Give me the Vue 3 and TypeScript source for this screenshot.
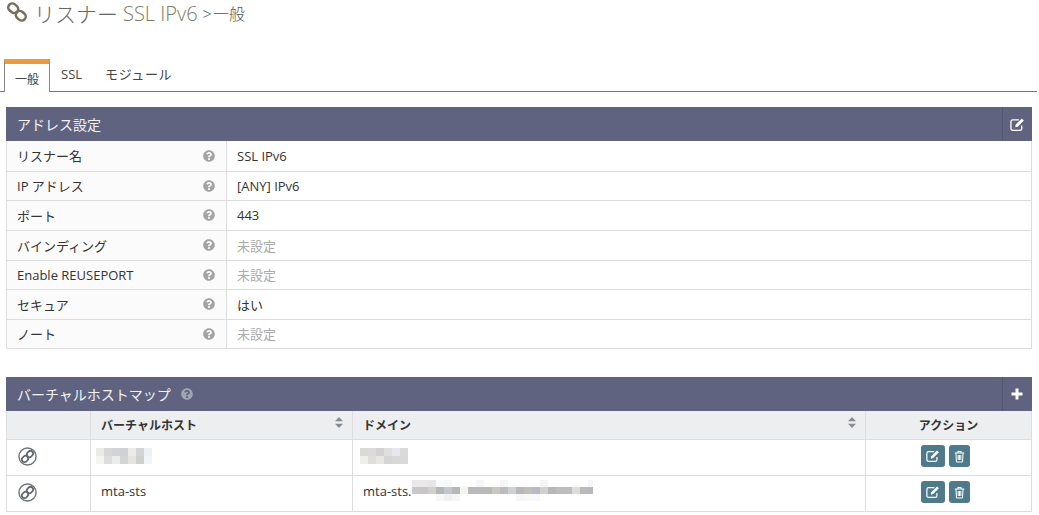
<script setup lang="ts">
interface Row {
  label: string
  value: string
  unset?: boolean
}

const rows: Row[] = [
  { label: 'リスナー名', value: 'SSL IPv6' },
  { label: 'IP アドレス', value: '[ANY] IPv6' },
  { label: 'ポート', value: '443' },
  { label: 'バインディング', value: '未設定', unset: true },
  { label: 'Enable REUSEPORT', value: '未設定', unset: true },
  { label: 'セキュア', value: 'はい' },
  { label: 'ノート', value: '未設定', unset: true }
]

// ぼかし部分のセル色
const blurHost = [
  '#eaeae8', '#d6d7d7', '#d2d3d4', '#d0d1d2', '#ecebe9', '#d3d4d6', '#eef0f5',
  '#f4f4f2', '#dcdddc', '#ebecec', '#d4d4d4', '#e4e4e1', '#cfcfcf', '#f3f4f7'
]
const blurDomain = [
  '#dad9d8', '#dcdbda', '#d2d2d2', '#dfdfe0', '#e6e8ee', '#dadada',
  '#eeeeea', '#dededd', '#e8e7e4', '#d5d5d6', '#d8d8d9', '#d9d9d9'
]
const w = '#ffffff'
const blurLong = [
  '#ebe8e8', '#eae8e8', '#e6e5e8', '#f9fafc', '#f8f8fa', w, w, w, '#f6f6f6', w, w, '#f6f6f6', w, w, w, w, '#f4f4f5', w, w, w, w, w, '#f6f6f6',
  '#c9c7c7', '#c8c6c6', '#d2cfce', '#b5b6b6', '#c3c6cc', '#b6b7b7', '#f3f4ee', '#b8b9b9', '#b8b9ba', '#b9b9b8', '#cac7c3', '#bbbcbc', '#cdd0d6', '#b9b8b8', '#c2bebb', '#b8babf', '#d0d0d0', '#b9b7b5', '#bcbdc1', '#bcbdc1', '#dddcd8', '#bdb9b7', '#b5b8bc',
  w, w, w, '#f7f7f8', '#f0f0f1', '#f6f6f6', w, w, w, w, w, w, w, '#f8f6f6', '#faf9f5', '#f8f9fc', w, w, w, w, w, w, w
]
</script>

<template>
  <div class="page">
    <h2 class="title">
      <svg class="title-icon" viewBox="0 0 20 20" width="20" height="20">
        <g fill="none" stroke="#75705f" stroke-width="2.500">
          <rect x="1" y="2.200" width="10.400" height="8" rx="4" transform="rotate(40 6.200 6.200)" />
          <rect x="8.600" y="9.800" width="10.400" height="8" rx="4" transform="rotate(40 13.800 13.800)" />
        </g>
      </svg>
      <span class="title-main">リスナー</span>
      <span class="title-name">SSL IPv6</span>
      <span class="title-sub">&gt; 一般</span>
    </h2>

    <ul class="tabs">
      <li class="tab active">一般</li>
      <li class="tab">SSL</li>
      <li class="tab tab-mod">モジュール</li>
    </ul>

    <section class="panel">
      <header class="panel-head">
        <span class="panel-title">アドレス設定</span>
        <span class="panel-action">
          <svg viewBox="0 0 16 16" width="15" height="15">
            <path d="M12.500 9v3.200a2 2 0 0 1-2 2H3a2 2 0 0 1-2-2V5a2 2 0 0 1 2-2h6.500" fill="none" stroke="#fff" stroke-width="1.400" />
            <path d="M6 8.200 12.600 1.600l2.200 2.200L8.200 10.400 5.600 11z" fill="#fff" />
          </svg>
        </span>
      </header>
      <table class="info">
        <colgroup>
          <col style="width: 220px" />
          <col />
        </colgroup>
        <tbody>
          <tr v-for="row in rows" :key="row.label">
            <td class="info-label">
              <div class="label-inner">
                <span>{{ row.label }}</span>
                <svg class="help" viewBox="0 0 512 512" width="12" height="12">
                  <path fill="#a3a3a3" d="M504 256c0 136.997-111.043 248-248 248S8 392.997 8 256C8 119.083 119.043 8 256 8s248 111.083 248 248zM262.655 90c-54.497 0-89.255 22.957-116.549 63.758-3.536 5.286-2.353 12.415 2.715 16.258l34.699 26.31c5.205 3.947 12.621 3.008 16.665-2.122 17.864-22.658 30.113-35.797 57.303-35.797 20.429 0 45.698 13.148 45.698 32.958 0 14.976-12.363 22.667-32.534 33.976C247.128 238.528 216 254.941 216 296v4c0 6.627 5.373 12 12 12h56c6.627 0 12-5.373 12-12v-1.333c0-28.462 83.186-29.647 83.186-106.667 0-58.002-60.165-102-116.531-102zM256 338c-25.365 0-46 20.635-46 46 0 25.364 20.635 46 46 46s46-20.636 46-46c0-25.365-20.635-46-46-46z" />
                </svg>
              </div>
            </td>
            <td :class="['info-value', { unset: row.unset }]">{{ row.value }}</td>
          </tr>
        </tbody>
      </table>
    </section>

    <section class="panel map">
      <header class="panel-head">
        <span class="panel-title">
          バーチャルホストマップ
          <svg class="help head-help" viewBox="0 0 512 512" width="12" height="12">
            <path fill="#a3a5ae" d="M504 256c0 136.997-111.043 248-248 248S8 392.997 8 256C8 119.083 119.043 8 256 8s248 111.083 248 248zM262.655 90c-54.497 0-89.255 22.957-116.549 63.758-3.536 5.286-2.353 12.415 2.715 16.258l34.699 26.31c5.205 3.947 12.621 3.008 16.665-2.122 17.864-22.658 30.113-35.797 57.303-35.797 20.429 0 45.698 13.148 45.698 32.958 0 14.976-12.363 22.667-32.534 33.976C247.128 238.528 216 254.941 216 296v4c0 6.627 5.373 12 12 12h56c6.627 0 12-5.373 12-12v-1.333c0-28.462 83.186-29.647 83.186-106.667 0-58.002-60.165-102-116.531-102zM256 338c-25.365 0-46 20.635-46 46 0 25.364 20.635 46 46 46s46-20.636 46-46c0-25.365-20.635-46-46-46z" />
          </svg>
        </span>
        <span class="panel-action plus">
          <svg viewBox="0 0 12 12" width="12" height="12">
            <path d="M4.500 0.500h3v4h4v3h-4v4h-3v-4h-4v-3h4z" fill="#fff" />
          </svg>
        </span>
      </header>
      <table class="hosts">
        <colgroup>
          <col style="width: 84px" />
          <col style="width: 262px" />
          <col style="width: 513px" />
          <col />
        </colgroup>
        <thead>
          <tr>
            <th></th>
            <th class="sortable">
              バーチャルホスト
              <svg class="sort" viewBox="0 0 8 11" width="8" height="11">
                <path d="M4 0 8 4.300H0zM4 11 0 6.700h8z" fill="#868c93" />
              </svg>
            </th>
            <th class="sortable">
              ドメイン
              <svg class="sort" viewBox="0 0 8 11" width="8" height="11">
                <path d="M4 0 8 4.300H0zM4 11 0 6.700h8z" fill="#868c93" />
              </svg>
            </th>
            <th class="center">アクション</th>
          </tr>
        </thead>
        <tbody>
          <tr v-for="n in 2" :key="n">
            <td class="link-cell">
              <svg viewBox="0 0 20 20" width="19" height="19">
                <circle cx="10" cy="10" r="9" fill="none" stroke="#6e737a" stroke-width="1.500" />
                <g fill="none" stroke="#62676e" stroke-width="1.800">
                  <rect x="3.900" y="9.800" width="7" height="5.600" rx="2.800" transform="rotate(-45 7.400 12.600)" />
                  <rect x="9.100" y="4.600" width="7" height="5.600" rx="2.800" transform="rotate(-45 12.600 7.400)" />
                </g>
              </svg>
            </td>
            <td>
              <span v-if="n === 2">mta-sts</span>
              <div v-else class="blur blur-host">
                <i v-for="(c, i) in blurHost" :key="i" :style="{ background: c }"></i>
              </div>
            </td>
            <td>
              <div v-if="n === 2" class="domain">
                <span>mta-sts.</span>
                <div class="blur blur-long">
                  <i v-for="(c, i) in blurLong" :key="i" :style="{ background: c }"></i>
                </div>
              </div>
              <div v-else class="blur blur-domain">
                <i v-for="(c, i) in blurDomain" :key="i" :style="{ background: c }"></i>
              </div>
            </td>
            <td class="center">
              <div class="actions">
                <button class="btn btn-edit">
                  <svg viewBox="0 0 16 16" width="14" height="14">
                    <path d="M12.500 9v3.200a2 2 0 0 1-2 2H3a2 2 0 0 1-2-2V5a2 2 0 0 1 2-2h6.500" fill="none" stroke="#fff" stroke-width="1.400" />
                    <path d="M6 8.200 12.600 1.600l2.200 2.200L8.200 10.400 5.600 11z" fill="#fff" />
                  </svg>
                </button>
                <button class="btn btn-del">
                  <svg viewBox="0 0 14 16" width="11" height="13">
                    <path d="M1 3.500h12M5 3.500V1.500h4v2M2.500 3.500l.6 10.500a1 1 0 0 0 1 1h5.800a1 1 0 0 0 1-1l.6-10.500M5.300 6v6.500M7 6v6.500M8.700 6v6.500" fill="none" stroke="#fff" stroke-width="1.300" />
                  </svg>
                </button>
              </div>
            </td>
          </tr>
        </tbody>
      </table>
    </section>
  </div>
</template>

<style>
body {
  background: #fff;
}
</style>

<style scoped>
.page {
  width: 1037px;
  font-family: "Open Sans", "Noto Sans CJK JP", sans-serif;
  font-size: 13px;
  color: #333;
}

.title {
  display: flex;
  align-items: center;
  height: 24px;
  margin: 1px 0 0;
  padding-left: 7px;
  font-weight: 300;
  color: #6a6a62;
}

.title-icon {
  margin: -2px 7px 0 0;
}

.title-main {
  font-size: 21px;
  color: #666;
}

.title-name {
  margin-left: 5px;
  font-size: 20px;
  color: #7a7a66;
}

.title-sub {
  margin-left: 5px;
  font-size: 16px;
  word-spacing: -3px;
  color: #555;
}

.tabs {
  display: flex;
  height: 32px;
  margin: 34px 0 0;
  padding: 0 0 0 4px;
  list-style: none;
  border-bottom: 1px solid #777;
}

.tab {
  padding: 6px 11px 0;
  line-height: 18px;
  white-space: nowrap;
  color: #444;
}

.tab.active {
  width: 46px;
  height: 33px;
  box-sizing: border-box;
  padding: 7px 0 0;
  text-align: center;
  font-size: 12px;
  background: #fff;
  border: 1px solid #888;
  border-top: 5px solid #ed9b3d;
  border-bottom: 0;
}

.tab-mod {
  margin-left: 1px;
  letter-spacing: 0.6px;
}

.panel {
  margin: 15px 5px 0 6px;
}

.panel.map {
  margin-top: 28px;
}

.panel-head {
  display: flex;
  justify-content: space-between;
  height: 34px;
  background: #5f6380;
  color: #f2f2f5;
}

.panel-title {
  display: flex;
  align-items: center;
  padding-left: 11px;
  font-size: 14px;
}

.head-help {
  margin-left: 10px;
}

.panel-action {
  display: flex;
  align-items: center;
  justify-content: center;
  width: 29px;
  border-left: 1px solid #54586f;
}

.panel-action.plus {
  padding-right: 1px;
  width: 28px;
}

table {
  width: 100%;
  border-collapse: collapse;
  table-layout: fixed;
}

td,
th {
  border: 1px solid #ddd;
  padding: 0 10px;
}

.info tr {
  height: 30px;
}

.info tr:nth-child(2),
.info tr:nth-child(5),
.info tr:nth-child(7) {
  height: 29px;
}

.info tr:first-child td {
  border-top: 0;
}

.info-label {
  background: #fbfbfb;
}

.label-inner {
  display: flex;
  align-items: center;
  justify-content: space-between;
}

.info-value.unset {
  color: #aaa;
}

.help {
  flex-shrink: 0;
  margin-right: 1px;
}

.hosts thead tr {
  height: 29px;
  background: #eceef0;
}

.hosts th {
  position: relative;
  text-align: left;
  font-size: 12px;
  font-weight: 700;
  color: #333;
  border-top: 0;
}

.hosts th.center,
.hosts td.center {
  text-align: center;
}

.hosts tbody tr {
  height: 36px;
}

.hosts tbody td {
  vertical-align: top;
  padding-top: 6px;
  line-height: 18px;
}

.sort {
  position: absolute;
  top: 6px;
  right: 9px;
}

.hosts tbody .link-cell {
  padding-left: 11px;
  padding-top: 7px;
}

.link-cell svg {
  display: block;
}

.blur {
  display: grid;
  grid-auto-rows: 8px;
  grid-template-columns: repeat(auto-fill, 8px);
}

.blur i {
  display: block;
}

.blur-host {
  width: 56px;
  margin: 2px 0 0 -5px;
}

.blur-domain {
  width: 48px;
  margin: 2px 0 0 -3px;
}

.domain {
  display: flex;
  align-items: center;
  margin-top: -2px;
}

.blur-long {
  grid-template-columns: repeat(23, 8px);
  width: 181px;
  overflow: hidden;
  grid-auto-rows: 7px;
}

.actions {
  display: flex;
  justify-content: center;
  gap: 4px;
  margin: -1px 6px 0 0;
}

.btn {
  display: flex;
  align-items: center;
  justify-content: center;
  height: 22px;
  padding: 0;
  background: #4f7a8c;
  border: 0;
  border-radius: 3px;
}

.btn-edit {
  width: 24px;
}

.btn-del {
  width: 21px;
}
</style>
